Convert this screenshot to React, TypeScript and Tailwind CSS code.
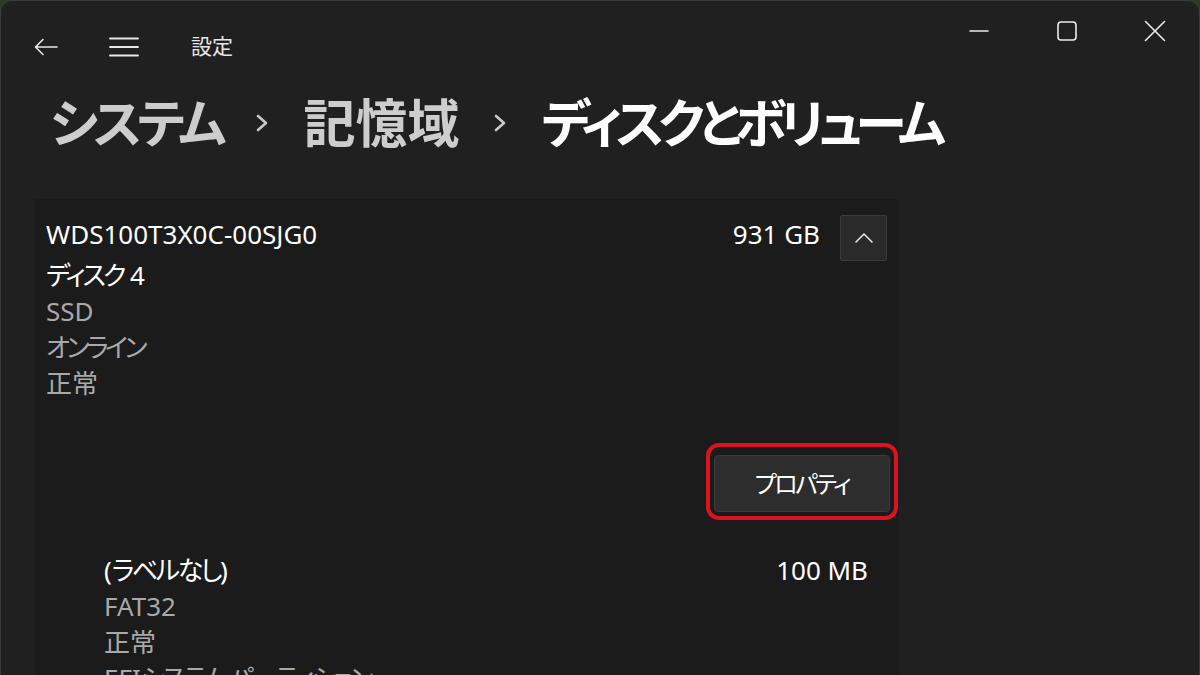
import React from "react";

const font = "[font-family:'Noto_Sans','Noto_Sans_CJK_JP',sans-serif] [font-feature-settings:'palt']";

function Chevron() {
  return (
    <svg width="16" height="24" viewBox="0 0 16 24" className="shrink-0">
      <path d="M4 5 L12 12 L4 19" fill="none" stroke="#c8c8c8" strokeWidth="2.6" strokeLinecap="round" strokeLinejoin="round" />
    </svg>
  );
}

function Line({ children, dim = false }: { children: React.ReactNode; dim?: boolean }) {
  return (
    <div className={`h-[36px] leading-[36px] text-[26px] whitespace-nowrap ${dim ? "text-[#a9a9a9]" : "text-white"}`}>{children}</div>
  );
}

export default function App() {
  return (
    <div className={`w-[1200px] h-[675px] overflow-hidden bg-[#2e3828] ${font}`}>
      <div className="w-full h-full bg-[#202020] rounded-t-[12px] border-t border-x border-[#3a3d38] flex flex-col">
        {/* title bar */}
        <div className="flex justify-between shrink-0">
          <div className="flex items-center h-[91px] pl-[33px]">
            <svg width="24" height="18" viewBox="0 0 24 18">
              <path d="M23 9 H2 M9 1.5 L1.5 9 L9 16.5" fill="none" stroke="#e8e8e8" strokeWidth="1.6" strokeLinecap="round" strokeLinejoin="round" />
            </svg>
            <svg width="30" height="20" viewBox="0 0 30 20" className="ml-[51px]">
              <path d="M1 1.5 H29 M1 10 H29 M1 18.5 H29" fill="none" stroke="#e8e8e8" strokeWidth="1.8" strokeLinecap="round" />
            </svg>
            <span className="ml-[52px] text-[21px] text-[#e8e8e8] leading-none">設定</span>
          </div>
          <div className="flex items-start">
            <div className="w-[88px] h-[60px] flex items-center justify-center">
              <svg width="20" height="4" viewBox="0 0 20 4">
                <path d="M1 2 H19" stroke="#ececec" strokeWidth="1.6" strokeLinecap="round" />
              </svg>
            </div>
            <div className="w-[88px] h-[60px] flex items-center justify-center">
              <svg width="20" height="20" viewBox="0 0 20 20">
                <rect x="1" y="1" width="18" height="18" rx="3" fill="none" stroke="#ececec" strokeWidth="1.6" />
              </svg>
            </div>
            <div className="w-[88px] h-[60px] flex items-center justify-center">
              <svg width="22" height="22" viewBox="0 0 22 22">
                <path d="M1.5 1.5 L20.5 20.5 M20.5 1.5 L1.5 20.5" stroke="#ececec" strokeWidth="1.6" strokeLinecap="round" />
              </svg>
            </div>
          </div>
        </div>

        {/* breadcrumb */}
        <div className="flex items-center gap-[33px] pl-[49px] mt-[5px] h-[52px] text-[52px] leading-[52px] font-semibold whitespace-nowrap shrink-0">
          <span className="text-[#cdcdcd] tracking-[-5px]">システム</span>
          <Chevron />
          <span className="text-[#cdcdcd]">記憶域</span>
          <Chevron />
          <span className="text-white tracking-[-6.5px]">ディスクとボリューム</span>
        </div>

        {/* card */}
        <div className="ml-[34px] mt-[50px] w-[864px] flex-1 bg-[#1b1b1b]">
          <div className="flex justify-between pl-[11px] pr-[12px]">
            <div className="pt-[17px]">
              <Line>WDS100T3X0C-00SJG0</Line>
              <div className="mt-[5px]">
                <Line>
                  <span className="tracking-[-3px]">ディスク</span> 4
                </Line>
                <Line dim>SSD</Line>
                <Line dim>
                  <span className="tracking-[-3.5px]">オンライン</span>
                </Line>
                <Line dim>正常</Line>
              </div>
            </div>
            <div className="flex items-start gap-[20px] pt-[16px]">
              <div className="mt-[1px]">
                <Line>931 GB</Line>
              </div>
              <div className="w-[47px] h-[46px] bg-[#2a2a2a] border border-[#3a3a3a] rounded-[2px] flex items-center justify-center">
                <svg width="20" height="12" viewBox="0 0 20 12">
                  <path d="M2 10 L10 2 L18 10" fill="none" stroke="#e6e6e6" strokeWidth="1.6" strokeLinecap="round" strokeLinejoin="round" />
                </svg>
              </div>
            </div>
          </div>

          <div className="flex justify-end pr-[1px] mt-[42px]">
            <div className="border-[4px] border-[#dc121c] rounded-[13px] px-[4px] pt-[8px] pb-[4px]">
              <div className="w-[176px] h-[57px] bg-[#2d2d2d] border border-[#3b3b3b] rounded-[4px] flex items-center justify-center text-[24px] text-white tracking-[-2.5px]">
                プロパティ
              </div>
            </div>
          </div>

          <div className="flex justify-between pl-[69px] pr-[31px] mt-[32px]">
            <div>
              <Line>
                (<span className="tracking-[-2.5px]">ラベルなし</span>)
              </Line>
              <Line dim>FAT32</Line>
              <Line dim>正常</Line>
              <Line dim>
                EFI<span className="tracking-[-2.5px]">システム パーティション</span>
              </Line>
            </div>
            <div>
              <Line>100 MB</Line>
            </div>
          </div>
        </div>
      </div>
    </div>
  );
}
